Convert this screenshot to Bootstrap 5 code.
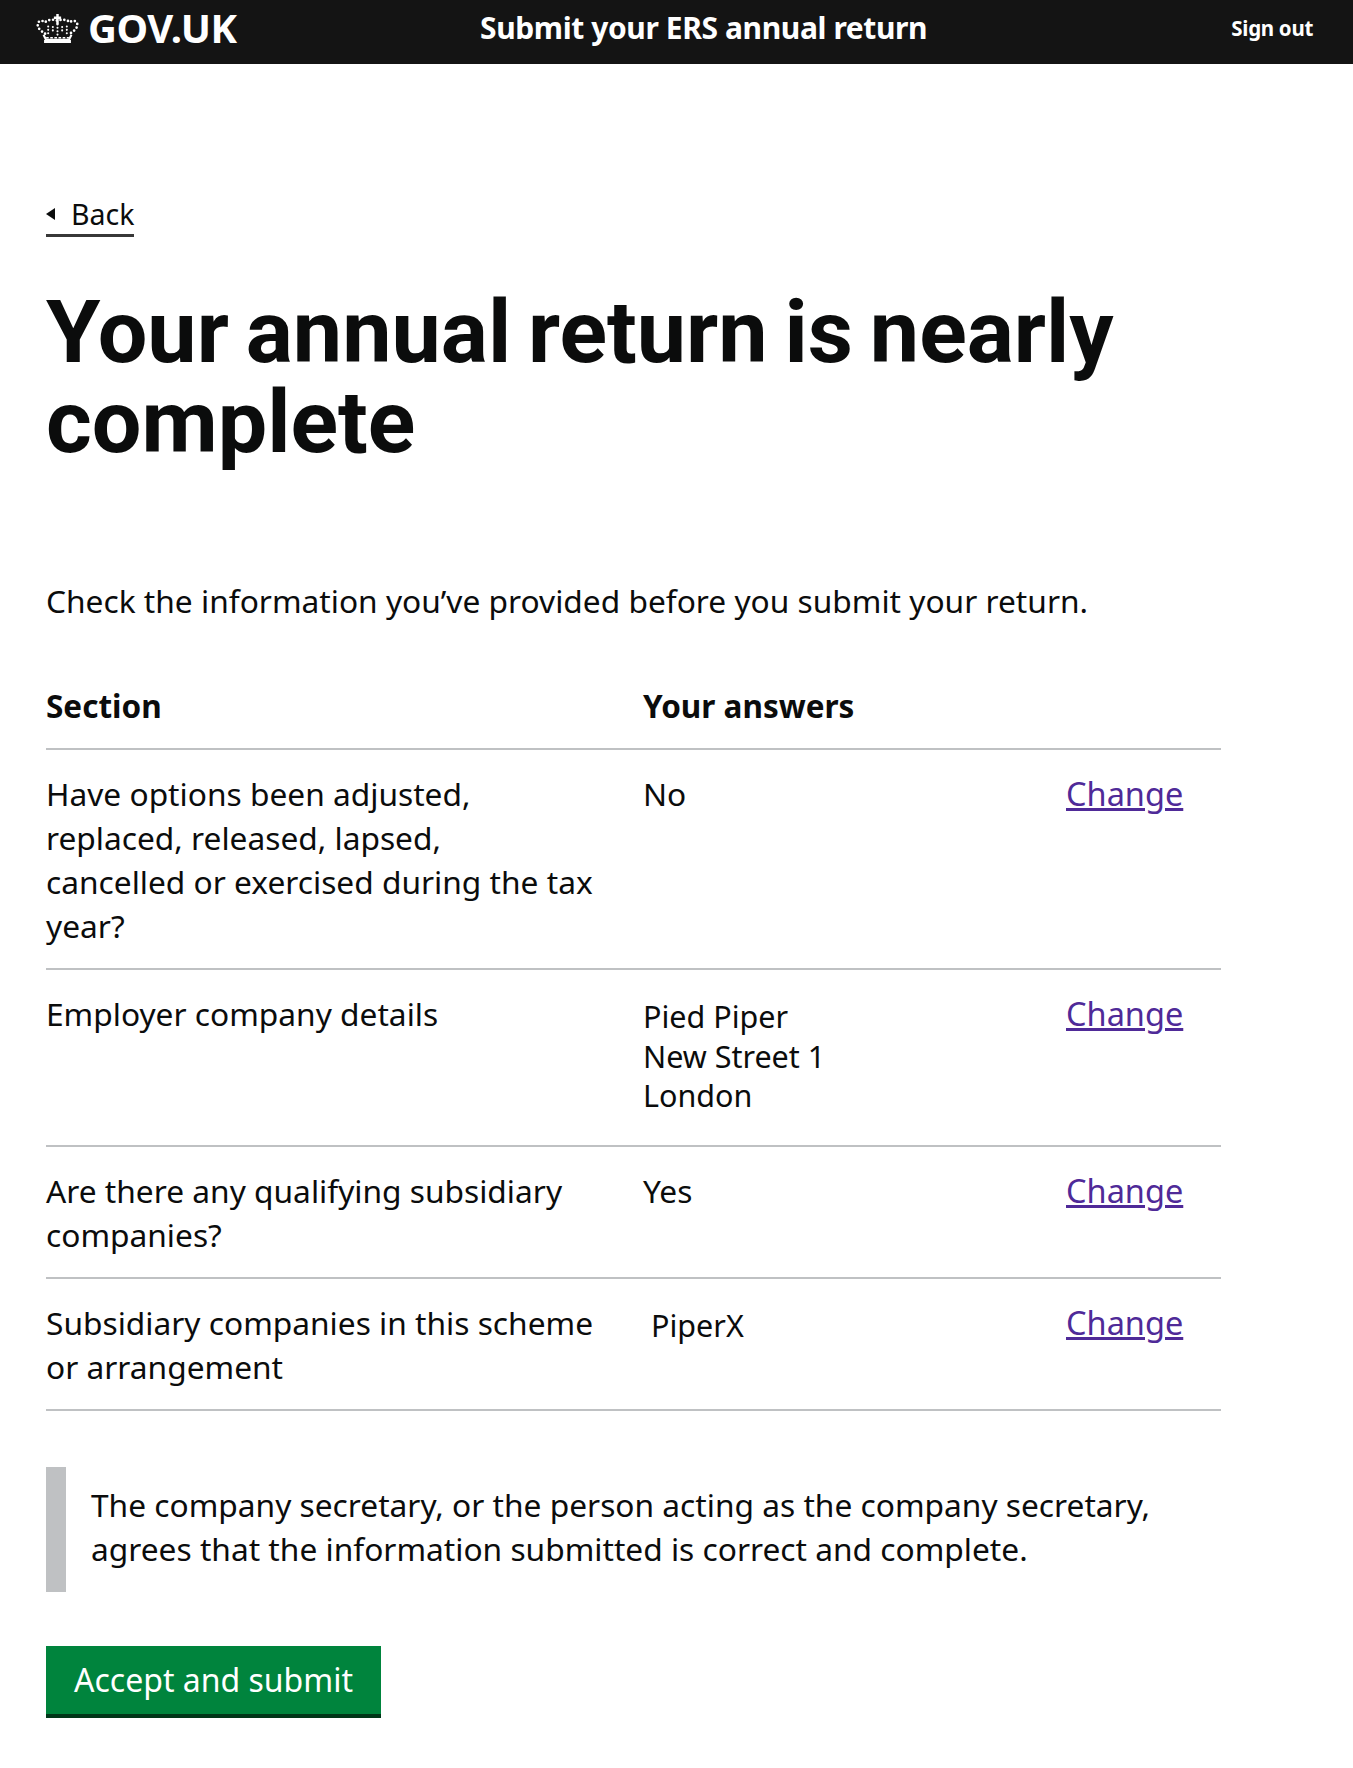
<!DOCTYPE html>
<html lang="en">
<head>
<meta charset="utf-8">
<title>Submit your ERS annual return</title>
<link href="https://cdn.jsdelivr.net/npm/bootstrap@5.3.0/dist/css/bootstrap.min.css" rel="stylesheet">
<style>
body{font-family:"Noto Sans","Liberation Sans",sans-serif;color:#0b0c0c;background:#fff;font-size:31.7px;line-height:44px;}
.gds-head{background:#141414;height:64px;color:#fff;padding:0 40px 0 35px;}
.gds-logo{width:445px;font-size:40px;font-weight:700;line-height:56px;letter-spacing:-.5px;}
.gds-title{font-size:30px;font-weight:700;line-height:56px;letter-spacing:-.4px;}
.gds-sign{font-size:20.500px;font-weight:700;line-height:56px;color:#fff;text-decoration:none;letter-spacing:-.3px;}
.gds-main{padding:133px 132px 0 46px;}
.gds-back{font-size:28.500px;line-height:34px;padding-bottom:3px;color:#0b0c0c;text-decoration:none;border-bottom:3px solid #383838;width:88px;gap:16px;}
.gds-tri{width:0;height:0;border:6px solid transparent;border-right:9px solid #0b0c0c;border-left:0;}
h1.gds-h1{font-family:Roboto,"Noto Sans",sans-serif;font-size:88px;line-height:90px;font-weight:700;word-spacing:-5px;margin:50px 0 0;}
.gds-lead{margin:112px 0 35px;}
.gds-tbl{width:100%;margin:0;table-layout:fixed;}
.gds-tbl th,.gds-tbl td{padding:22px 0 20px;border-bottom:2px solid #bfc1c3;vertical-align:top;font-size:31.7px;line-height:44px;}
.gds-tbl thead th{padding:26px 0 20px;font-weight:700;font-size:31.500px;}
.gds-c1{width:597px;}
.gds-c3{width:155px;}
.gds-tbl td.gds-ans{line-height:39.5px;padding-top:27px;padding-bottom:29px;font-size:30.500px;}
.gds-tbl td.gds-ans2{padding-bottom:0;}
.gds-in{padding-left:8px;}
.gds-link{color:#4f2a98;text-decoration:underline;font-size:32.500px;}
.gds-inset{border-left:20px solid #bfc1c3;padding:16px 0 21px 25px;margin-top:56px;}
.gds-btn{background:#00843d;color:#fff;border:0;border-bottom:4px solid #003618;border-radius:0;font-size:32px;line-height:44px;padding:12px 28px 12px;margin-top:54px;width:335px;height:72px;}
.gds-btn:hover{background:#00843d;color:#fff;}
</style>
</head>
<body>
<header class="gds-head d-flex align-items-start justify-content-between">
  <div class="gds-logo d-flex align-items-center gap-2">
    <svg width="45" height="30" viewBox="2 0 42 29" fill="none" stroke="#fff" aria-hidden="true">
      <path d="M23 1v10M19.500 4.500h7" stroke-width="2.400"/>
      <path d="M11 20C8 18 3 15 4 10c1-3 5-3 7-1 3-3 8-3 12-1.500 4-1.500 9-1.500 12 1.500 2-2 6-2 7 1 1 5-4 8-7 10" stroke-width="2.600" stroke-linecap="round" stroke-dasharray="0 3.700"/>
      <path d="M14 13v9M23 11v11M32 13v9M18.500 13.500v6M27.500 13.500v6" stroke-width="2" stroke-linecap="round" stroke-dasharray="0 3.300"/>
      <path d="M9.500 21l2.500 5h22l2.500-5" stroke-width="2"/>
      <path d="M10 27.500h26" stroke-width="3"/>
      <path d="M12 24h22" stroke-width="1.500" stroke-dasharray="2.500 1.500"/>
    </svg>
    <span>GOV.UK</span>
  </div>
  <div class="gds-title flex-grow-1">Submit your ERS annual return</div>
  <a class="gds-sign" href="#">Sign out</a>
</header>
<main class="gds-main">
  <a class="gds-back d-flex align-items-center" href="#"><span class="gds-tri"></span><span>Back</span></a>
  <h1 class="gds-h1">Your annual return is nearly<br>complete</h1>
  <p class="gds-lead">Check the information you’ve provided before you submit your return.</p>
  <table class="gds-tbl table-borderless">
    <thead>
      <tr><th class="gds-c1">Section</th><th>Your answers</th><th class="gds-c3"></th></tr>
    </thead>
    <tbody>
      <tr><td>Have options been adjusted,<br>replaced, released, lapsed,<br>cancelled or exercised during the tax<br>year?</td><td>No</td><td><a class="gds-link" href="#">Change</a></td></tr>
      <tr><td>Employer company details</td><td class="gds-ans">Pied Piper<br>New Street 1<br>London</td><td><a class="gds-link" href="#">Change</a></td></tr>
      <tr><td>Are there any qualifying subsidiary<br>companies?</td><td>Yes</td><td><a class="gds-link" href="#">Change</a></td></tr>
      <tr><td>Subsidiary companies in this scheme<br>or arrangement</td><td class="gds-ans gds-ans2"><span class="gds-in">PiperX</span></td><td><a class="gds-link" href="#">Change</a></td></tr>
    </tbody>
  </table>
  <div class="gds-inset">The company secretary, or the person acting as the company secretary,<br>agrees that the information submitted is correct and complete.</div>
  <button type="button" class="btn gds-btn">Accept and submit</button>
</main>
<script src="https://cdn.jsdelivr.net/npm/bootstrap@5.3.0/dist/js/bootstrap.bundle.min.js"></script>
</body>
</html>
